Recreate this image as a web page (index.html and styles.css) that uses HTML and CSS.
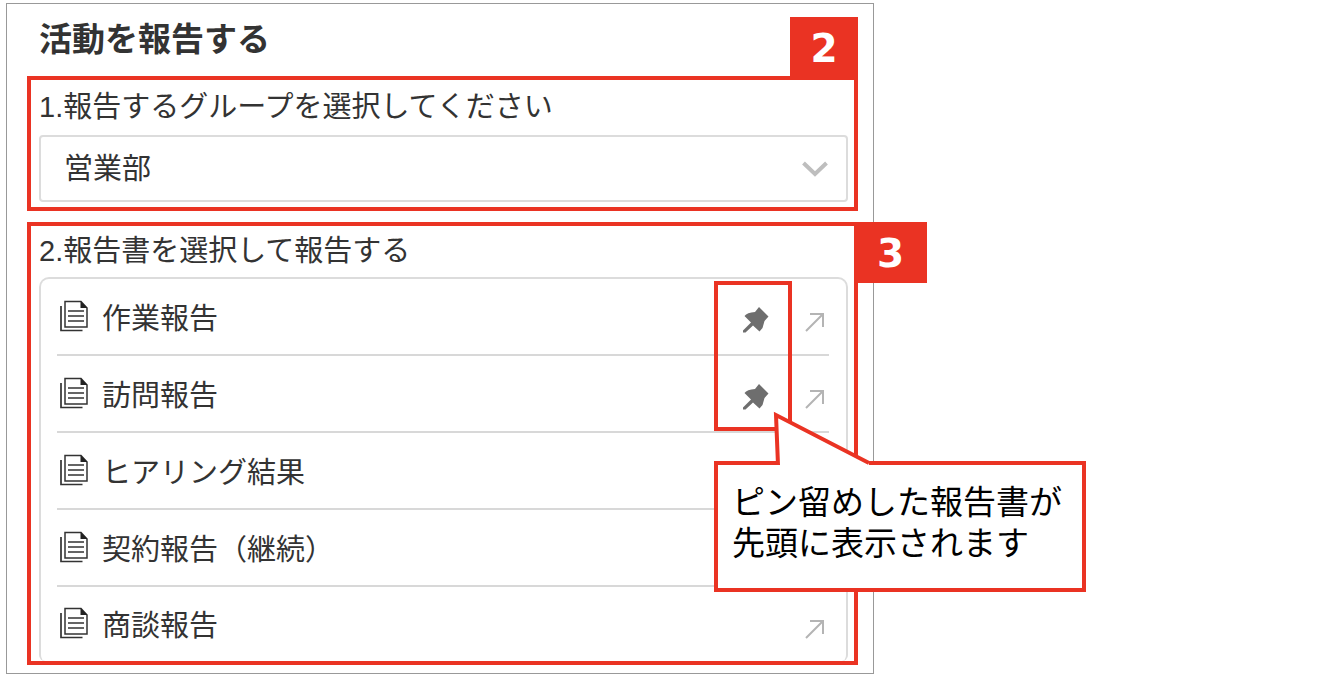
FILE: index.html
```html
<!DOCTYPE html>
<html lang="ja">
<head>
    <meta charset="UTF-8">
    <meta name="viewport" content="width=device-width, initial-scale=1.0">
    <title>活動を報告する</title>
    <link rel="stylesheet" href="styles.css">
</head>
<body>
    <!-- 共通アイコン -->
    <svg class="sprite" aria-hidden="true">
        <symbol id="icon-doc" viewBox="0 0 28 32">
            <path d="M5 1.500H21L27 8V27H5z" fill="none" stroke="#333" stroke-width="1.500"/>
            <path d="M20.500 1L27.500 8H20.500z" fill="#222"/>
            <path d="M1 6V30.500H22.500" fill="none" stroke="#333" stroke-width="1.700"/>
            <path d="M8 11H24M8 16H24M8 21H24" stroke="#333" stroke-width="1.700"/>
        </symbol>
        <symbol id="icon-pin" viewBox="0 0 26 26">
            <path d="M16 0L25.500 9.500 21.500 14 19.500 21 16.500 24.500 10 18.500 2.500 25.500 0 25.500 0 23.500 8 15.500 1.500 9Q4 5.500 12 5z" fill="#6e6e6e"/>
        </symbol>
        <symbol id="icon-arrow" viewBox="0 0 20 20">
            <path d="M1 19L18 2M5 2H18V15" fill="none" stroke="#b4b4b4" stroke-width="2"/>
        </symbol>
    </svg>

    <main class="panel">
        <h1 class="title">活動を報告する</h1>

        <!-- グループ選択 -->
        <section class="step step-group">
            <span class="badge badge-top">2</span>
            <label class="step-label" for="group">1.報告するグループを選択してください</label>
            <div class="select-wrap">
                <select id="group" class="select">
                    <option>営業部</option>
                </select>
                <svg class="chevron" viewBox="0 0 26 16" aria-hidden="true">
                    <path d="M1.500 2L13 13 24.500 2" fill="none" stroke="#bebebe" stroke-width="4"/>
                </svg>
            </div>
        </section>

        <!-- 報告書選択 -->
        <section class="step step-report">
            <span class="badge badge-side">3</span>
            <h2 class="step-label">2.報告書を選択して報告する</h2>
            <ul class="list">
                <li><a class="row" href="#">
                    <svg class="doc"><use href="#icon-doc"/></svg>
                    <span class="name">作業報告</span>
                    <svg class="pin"><use href="#icon-pin"/></svg>
                    <svg class="arrow"><use href="#icon-arrow"/></svg>
                </a></li>
                <li><a class="row" href="#">
                    <svg class="doc"><use href="#icon-doc"/></svg>
                    <span class="name">訪問報告</span>
                    <svg class="pin"><use href="#icon-pin"/></svg>
                    <svg class="arrow"><use href="#icon-arrow"/></svg>
                </a></li>
                <li><a class="row" href="#">
                    <svg class="doc"><use href="#icon-doc"/></svg>
                    <span class="name">ヒアリング結果</span>
                    <svg class="arrow"><use href="#icon-arrow"/></svg>
                </a></li>
                <li><a class="row" href="#">
                    <svg class="doc"><use href="#icon-doc"/></svg>
                    <span class="name">契約報告（継続）</span>
                    <svg class="arrow"><use href="#icon-arrow"/></svg>
                </a></li>
                <li><a class="row" href="#">
                    <svg class="doc"><use href="#icon-doc"/></svg>
                    <span class="name">商談報告</span>
                    <svg class="arrow"><use href="#icon-arrow"/></svg>
                </a></li>
            </ul>

            <!-- ピンの説明 -->
            <div class="pin-frame"></div>
            <div class="callout">
                <svg class="pointer" viewBox="0 0 100 58" aria-hidden="true">
                    <path d="M5 58L3 8 96 56V58z" fill="#fff"/>
                    <path d="M5 58L3 8 96 56" fill="none" stroke="#ea3323" stroke-width="4"/>
                </svg>
                <p>ピン留めした報告書が<br>先頭に表示されます</p>
            </div>
        </section>
    </main>
</body>
</html>
```
FILE: styles.css
```css
* {
    box-sizing: border-box;
}

body {
    margin: 0;
    padding: 3px 6px;
    background: #fff;
    color: #333;
    font-family: "Liberation Sans", "Noto Sans CJK JP", sans-serif;
    font-size: 29px;
}

.sprite {
    display: none;
}

.panel {
    width: 100%;
    max-width: 868px;
    padding: 0 15px 8px 20px;
    border: 1px solid #999;
}

.title {
    margin: 0;
    padding-left: 12px;
    font-size: 33px;
    line-height: 72px;
}

/* 赤枠 */
.step {
    position: relative;
    padding: 0 6px 0 8px;
    border: 4px solid #ea3323;
}

.step-group {
    padding-bottom: 5px;
    margin-bottom: 11px;
}

.step-label {
    display: block;
    margin: 0;
    font-size: 29px;
    font-weight: normal;
    line-height: 55px;
}

.step-report .step-label {
    line-height: 51px;
}

.badge {
    position: absolute;
    background: #ea3323;
    color: #fff;
    font-family: "DejaVu Sans", sans-serif;
    font-size: 39px;
    font-weight: bold;
    line-height: 63px;
    text-align: center;
}

.badge-top {
    right: -4px;
    bottom: 100%;
    width: 68px;
    height: 63px;
}

.badge-side {
    top: -4px;
    left: 100%;
    width: 73px;
    height: 61px;
}

.select-wrap {
    position: relative;
}

.select {
    display: block;
    width: 100%;
    height: 67px;
    padding: 0 23px;
    border: 2px solid #dcdcdc;
    border-radius: 4px;
    background: #fff;
    color: #333;
    font: inherit;
    appearance: none;
}

.chevron {
    position: absolute;
    top: 26px;
    right: 20px;
    width: 26px;
    height: 16px;
    pointer-events: none;
}

.list {
    margin: 0;
    padding: 0 17px 0 16px;
    list-style: none;
    border: 2px solid #dcdcdc;
    border-bottom: none;
    border-radius: 10px 10px 6px 6px;
}

.row {
    display: flex;
    align-items: center;
    height: 77px;
    padding: 0 4px 2px 3px;
    border-bottom: 2px solid #d8d8d8;
    color: #333;
    text-decoration: none;
}

.list li:last-child .row {
    height: 74px;
    border-bottom: none;
}

.doc {
    width: 28px;
    height: 32px;
    margin-right: 14px;
}

.name {
    flex: 1;
}

.pin {
    width: 26px;
    height: 26px;
    margin: 8px 36px 0 0;
}

.arrow {
    width: 20px;
    height: 20px;
    margin-top: 12px;
}

.pin-frame {
    position: absolute;
    top: 55px;
    right: 62px;
    width: 78px;
    height: 150px;
    border: 4px solid #ea3323;
}

/* 吹き出し */
.callout {
    position: absolute;
    top: 235px;
    right: -232px;
    width: 372px;
    height: 131px;
    padding: 17px 14px;
    border: 4px solid #ea3323;
    background: #fff;
    color: #000;
    font-size: 33px;
    line-height: 41px;
    white-space: nowrap;
}

.callout p {
    margin: 0;
}

.pointer {
    position: absolute;
    top: -58px;
    left: 55px;
    width: 100px;
    height: 58px;
}
```
